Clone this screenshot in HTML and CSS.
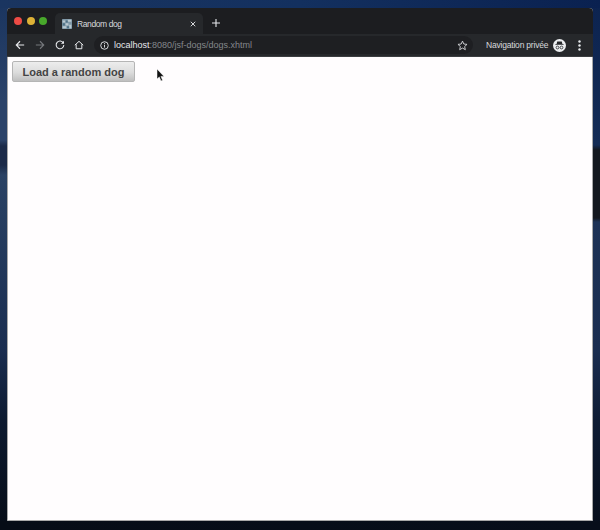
FILE: index.html
```html
<!DOCTYPE html>
<html lang="fr">
<head>
<meta charset="utf-8">
<title>Random dog</title>
<link rel="stylesheet" href="styles.css">
</head>
<body>
<div class="window">
  <div class="tabstrip">
    <div class="lights">
      <span class="light red"></span>
      <span class="light yellow"></span>
      <span class="light green"></span>
    </div>
    <div class="tab">
      <svg class="favicon" width="14" height="14" viewBox="0 0 14 14">
        <rect width="14" height="14" rx="1" fill="#7f98a8"/>
        <path d="M1 2h4v3H1zM8 1h5v3H8zM5 6h4v3H5zM1 10h5v3H1zM10 8h3v5h-3z" fill="#b9c8d0"/>
        <path d="M5 2h3v3H5zM1 6h3v3H1zM7 10h3v3H7z" fill="#4f7186"/>
      </svg>
      <span class="tab-title">Random dog</span>
      <svg class="tab-close" width="8" height="8" viewBox="0 0 8 8"><path d="M1 1l6 6M7 1L1 7" stroke="#e8eaed" stroke-width="1.2" fill="none"/></svg>
    </div>
    <svg class="newtab" width="10" height="10" viewBox="0 0 10 10"><path d="M5 1v8M1 5h8" stroke="#e8eaed" stroke-width="1.1" fill="none"/></svg>
  </div>
  <div class="toolbar">
    <svg class="nav first" width="12" height="12" viewBox="0 0 12 12"><path d="M11 6H2M6 1.5L1.5 6 6 10.5" stroke="#e8eaed" stroke-width="1.3" fill="none"/></svg>
    <svg class="nav" width="12" height="12" viewBox="0 0 12 12"><path d="M1 6h9M6 1.5L10.5 6 6 10.5" stroke="#75787c" stroke-width="1.3" fill="none"/></svg>
    <svg class="nav" width="12" height="12" viewBox="0 0 12 12"><path d="M10 3.6A4.6 4.6 0 1 0 10.6 6" stroke="#e8eaed" stroke-width="1.3" fill="none"/><path d="M10.8 .8v3.7H7.1z" fill="#e8eaed"/></svg>
    <svg class="nav home" width="12" height="12" viewBox="0 0 12 12"><path d="M1 6.2L6 1.6l5 4.6M2.6 5.2v5.3h6.8V5.2" stroke="#e8eaed" stroke-width="1.2" fill="none"/></svg>
    <div class="omnibox">
      <svg class="info" width="10" height="10" viewBox="0 0 10 10"><circle cx="5" cy="5" r="4.2" stroke="#e8eaed" fill="none"/><path d="M5 4.3v3M5 2.4v1.1" stroke="#e8eaed" fill="none"/></svg>
      <span class="url"><span class="host">localhost</span>:8080/jsf-dogs/dogs.xhtml</span>
      <svg class="star" width="11" height="11" viewBox="0 0 12 12"><path d="M6 1.2l1.45 3.2 3.5.37-2.62 2.36.74 3.44L6 8.8l-3.07 1.77.74-3.44L1.05 4.77l3.5-.37z" stroke="#d5d7da" fill="none"/></svg>
    </div>
    <span class="private">Navigation privée</span>
    <svg class="incognito" width="13" height="13" viewBox="0 0 13 13">
      <circle cx="6.5" cy="6.5" r="6.5" fill="#eceef0"/>
      <path d="M4.2 2.6h4.6l.6 2.3H3.6zM2.4 5.3h8.2v.8H2.4z" fill="#26282b"/>
      <circle cx="4.5" cy="8.5" r="1.4" fill="none" stroke="#26282b" stroke-width=".8"/>
      <circle cx="8.5" cy="8.5" r="1.4" fill="none" stroke="#26282b" stroke-width=".8"/>
    </svg>
    <svg class="menu" width="3" height="11" viewBox="0 0 3 11"><circle cx="1.5" cy="1.5" r="1.2" fill="#e8eaed"/><circle cx="1.5" cy="5.5" r="1.2" fill="#e8eaed"/><circle cx="1.5" cy="9.5" r="1.2" fill="#e8eaed"/></svg>
  </div>
  <main class="page">
    <button class="load" type="button">Load a random dog</button>
  </main>
</div>
<svg class="cursor" width="9" height="13" viewBox="0 0 9 13"><path d="M1 0v10l2.3-2.1L5 12l1.6-.7-1.7-3.9H8z" fill="#111" stroke="#fff" stroke-width=".5"/></svg>
</body>
</html>
```
FILE: styles.css
```css
* { box-sizing: border-box; }
html, body { height: 100%; }
body {
  margin: 0;
  padding: 8px 7px 9px;
  background-color: #0c1a30;
  background-image:
    linear-gradient(90deg, #1a3560 0, #13305f 50%, #0a2150 100%),
    linear-gradient(90deg, #060c16 0, #070e1a 100%),
    linear-gradient(180deg, #1a3560 0, #2b4268 100px, #2b4268 140px, #1b2a48 146px, #1b2a48 165px, #2a4264 175px, #1a2d50 350px, #0d1a30 420px, #060c16 530px),
    linear-gradient(180deg, #0c2350 0, #142c55 145px, #14181f 150px, #14181f 218px, #1d3256 222px, #1a2d50 350px, #0e1c34 420px, #070e1a 530px);
  background-size: 100% 8px, 100% 9px, 50% 100%, 50% 100%;
  background-position: left top, left bottom, left top, right top;
  background-repeat: no-repeat;
  font-family: "Liberation Sans", Arial, sans-serif;
  overflow: hidden;
}
.window {
  height: 513px;
  display: flex;
  flex-direction: column;
  border-radius: 4px 4px 2px 2px;
  overflow: hidden;
  background: #fff;
}
.tabstrip {
  height: 26px;
  flex: none;
  background: #1c1d20;
  display: flex;
  align-items: flex-end;
}
.lights {
  display: flex;
  gap: 4.5px;
  width: 48px;
  padding-left: 7px;
  align-self: flex-start;
  margin-top: 9px;
}
.light { width: 8px; height: 8px; border-radius: 50%; }
.red { background: #ee4b45; }
.yellow { background: #ddb136; }
.green { background: #48a82b; }
.tab {
  width: 148px;
  height: 21px;
  background: #26282b;
  border-radius: 5px 5px 0 0;
  display: flex;
  align-items: center;
  padding: 0 7px;
}
.favicon { flex: none; width: 10px; height: 10px; }
.tab-title {
  color: #d8dadd;
  font-size: 8.5px;
  letter-spacing: -.4px;
  margin-left: 5px;
  flex: 1;
}
.tab-close { flex: none; width: 6px; height: 6px; }
.newtab { margin: 0 0 6px 8px; }
.toolbar {
  height: 23px;
  flex: none;
  background: #26282b;
  border-bottom: 1px solid #3b3d40;
  display: flex;
  align-items: center;
}
.nav { flex: none; margin-left: 10px; width: 10px; height: 10px; }
.nav.first { margin-left: 8px; }
.nav.home { margin-left: 9px; }
.omnibox {
  margin-left: 10px;
  height: 18px;
  width: 379px;
  background: #1e1f22;
  border-radius: 9px;
  display: flex;
  align-items: center;
  padding: 0 5px 0 6px;
  flex: none;
}
.info { flex: none; width: 9px; height: 9px; }
.url {
  margin-left: 5px;
  flex: 1;
  font-size: 9px;
  color: #84878b;
  white-space: nowrap;
}
.host { color: #e8eaed; }
.star { flex: none; }
.private {
  width: 62px;
  margin-left: 13px;
  font-size: 8.5px;
  letter-spacing: -.2px;
  color: #d8dadd;
  white-space: nowrap;
}
.incognito { flex: none; margin-left: 5px; }
.menu { flex: none; margin-left: 12px; }
.page {
  flex: 1;
  background: #fffdfe;
  padding: 4px 4px;
  border: 1px solid #a8a8a8;
  border-top: 0;
}
.load {
  display: block;
  width: 123px;
  height: 21px;
  padding: 0;
  border: 1px solid #b5b5b5;
  border-radius: 2px;
  background: linear-gradient(180deg, #ededed 0, #dcdcdc 55%, #bfbfbf 100%);
  color: #444;
  font-family: "Liberation Sans", Arial, sans-serif;
  font-weight: bold;
  font-size: 11px;
}
.cursor {
  position: absolute;
  left: 156px;
  top: 69px;
}
```
